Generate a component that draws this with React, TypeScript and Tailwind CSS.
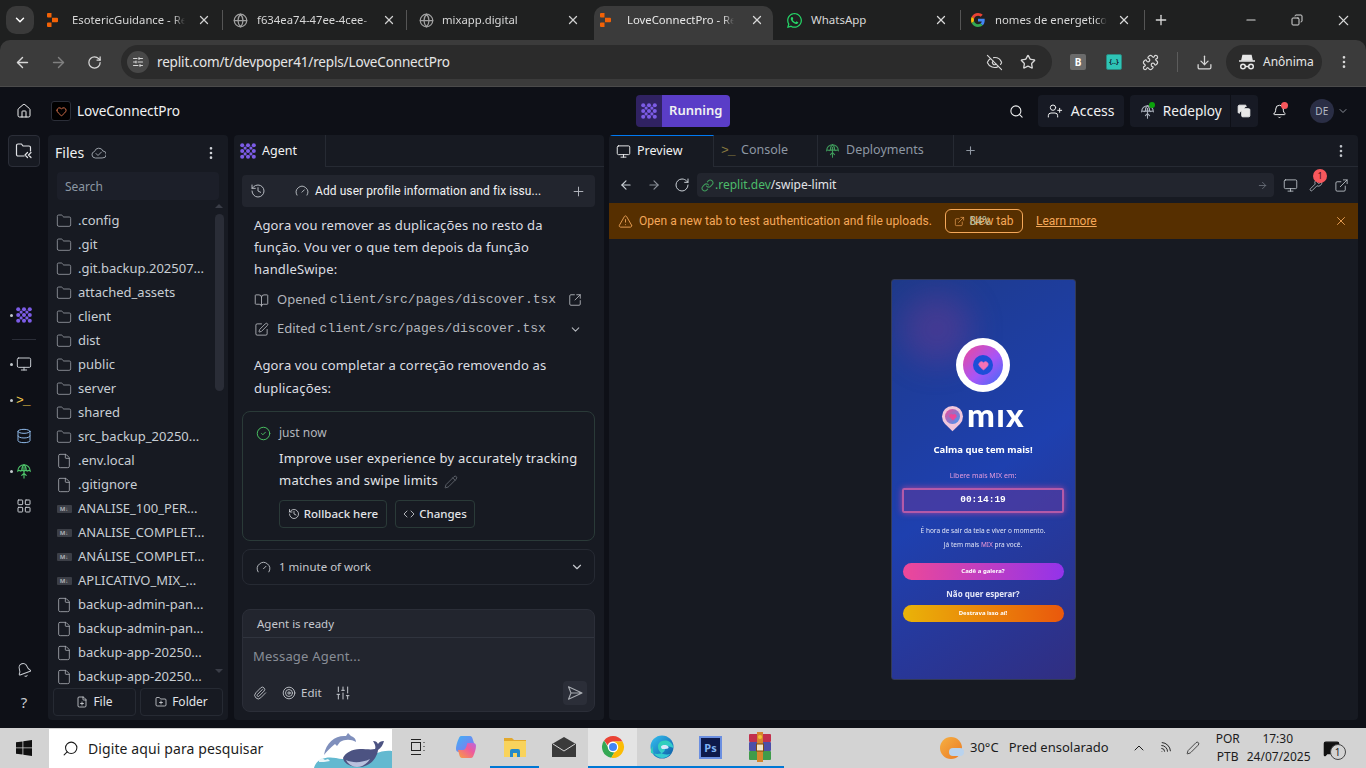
import React from "react";
import {
  ArrowLeft, ArrowRight, Bell, BookOpen, ChevronDown, ChevronUp, Code, Database, Download, ExternalLink, EyeOff, File as FileIcon,
  FilePlus, Folder, FolderPlus, Gauge, Globe, History, Home, LayoutGrid, Link, Minus, Monitor, MoreVertical, Paperclip, Pencil, Plus,
  Puzzle, RotateCw, Search, SlidersHorizontal, SlidersVertical, SquareArrowOutUpRight, SquarePen, Star, Wrench, TriangleAlert, UserPlus, X, CircleCheck, Heart, Copy, Target, MessageSquare, Wifi, Pen,
} from "lucide-react";
import { FaWhatsapp } from "react-icons/fa";

const AgentIcon = ({ size = 18 }: { size?: number }) => (
  <svg width={size} height={size} viewBox="0 0 18 18" fill="#7c5ce6">
    {[2.5, 9, 15.5].map((y) => [2.5, 9, 15.5].map((x) => <circle key={`${x}${y}`} cx={x} cy={y} r="2.3" />))}
    {[5.75, 12.25].map((y) => [5.75, 12.25].map((x) => <circle key={`b${x}${y}`} cx={x} cy={y} r="1.8" />))}
  </svg>
);
const ReplitFav = () => (
  <svg width="11" height="14" viewBox="0 0 11 14" fill="#f26207">
    <path d="M0 1a1 1 0 0 1 1-1h3.5v4.5H1a1 1 0 0 1-1-1zM5 4.7h5a1 1 0 0 1 1 1v2.6a1 1 0 0 1-1 1H5zM0 10.5a1 1 0 0 1 1-1h3.5V14H1a1 1 0 0 1-1-1z" />
  </svg>
);
const GoogleG = () => (
  <svg width="14" height="14" viewBox="0 0 48 48">
    <path fill="#EA4335" d="M24 9.5c3.5 0 6.7 1.2 9.2 3.6l6.9-6.9C35.9 2.4 30.5 0 24 0 14.6 0 6.5 5.4 2.6 13.2l8 6.2C12.5 13.7 17.8 9.5 24 9.5z" />
    <path fill="#4285F4" d="M47 24.5c0-1.6-.1-3.1-.4-4.5H24v9h13c-.6 3-2.3 5.5-4.8 7.2l7.7 6C44.400 38 47 31.800 47 24.500z" />
    <path fill="#FBBC05" d="M10.600 28.600A14.500 14.500 0 0 1 9.800 24c0-1.600.3-3.100.8-4.600l-8-6.200A24 24 0 0 0 0 24c0 3.900.9 7.500 2.600 10.800z" />
    <path fill="#34A853" d="M24 48c6.500 0 11.900-2.100 15.900-5.800l-7.700-6c-2.200 1.400-4.900 2.300-8.200 2.300-6.200 0-11.500-4.200-13.400-9.900l-8 6.200C6.500 42.600 14.600 48 24 48z" />
  </svg>
);
const ChromeLogo = () => (
  <svg width="24" height="24" viewBox="0 0 48 48">
    <path fill="#EA4335" d="M24 2a22 22 0 0 1 19 11H24a11 11 0 0 0-10.500 7.500L6.200 11A22 22 0 0 1 24 2z" />
    <path fill="#34A853" d="M6.200 11l9.500 16.500A11 11 0 0 0 27 34.600L20.500 45.700A22 22 0 0 1 6.200 11z" />
    <path fill="#FBBC05" d="M43 13a22 22 0 0 1-22.500 32.700L30 29.500A11 11 0 0 0 31 17l-7-4z" />
    <circle cx="24" cy="24" r="10.500" fill="#fff" />
    <circle cx="24" cy="24" r="8" fill="#4285F4" />
  </svg>
);
const EdgeLogo = () => (
  <svg width="24" height="24" viewBox="0 0 24 24">
    <defs>
      <linearGradient id="edg" x1="0" y1="0" x2="1" y2="1"><stop offset="0" stopColor="#35c1f1" /><stop offset="1" stopColor="#0c59a4" /></linearGradient>
      <linearGradient id="edg2" x1="0" y1="0" x2="1" y2="1"><stop offset="0" stopColor="#2fd6a3" /><stop offset="1" stopColor="#36c4e8" /></linearGradient>
    </defs>
    <circle cx="12" cy="12" r="11.500" fill="url(#edg)" />
    <path d="M23.400 13c-.4-5-4.600-7.500-8.400-7.500-4.400 0-7 2.800-7 6 0 4.500 3.600 8 8.500 8 1.500 0 3-.4 4-1-2 3-5 4.500-8.500 4.500-2 0-4-.8-5.500-2C3 18.500 2 15 3 11c-2 2-2.500 5-2 7 2 0 4 1 6 1 6 0 8-3 8-5 0-1-.5-1.500-1-2 5-2 7 0 9.400 1z" fill="url(#edg2)" />
    <path d="M11 11.500c2-2 6-2 7.500.5.600 1-1 2-3.500 2s-4 .5-4-2.500z" fill="#d7e9fb" />
  </svg>
);
const WinRar = () => (
  <svg width="24" height="30" viewBox="0 0 24 30">
    <rect x="1" y="2" width="22" height="8" rx="1" fill="#c2304c" />
    <rect x="1" y="10" width="22" height="9" rx="1" fill="#4c4fa8" />
    <rect x="1" y="19" width="22" height="9" rx="1" fill="#3f9b4a" />
    <rect x="9" y="0" width="6" height="30" fill="#d6852c" />
    <rect x="8.500" y="12" width="7" height="7" fill="#f3e4c4" stroke="#7c4a14" />
    <circle cx="12" cy="5" r="2" fill="#f2c231" />
  </svg>
);
const Explorer = () => (
  <svg width="24" height="24" viewBox="0 0 24 24">
    <path d="M1 3h8l2 2h12v3H1z" fill="#e2a82c" />
    <rect x="1" y="6" width="22" height="16" fill="#f9d35c" />
    <path d="M7 22v-6a2 2 0 0 1 2-2h6a2 2 0 0 1 2 2v6h-3v-4h-4v4z" fill="#2389c9" />
  </svg>
);
const Copilot = () => (
  <svg width="22" height="24" viewBox="0 0 22 24">
    <defs>
      <linearGradient id="co1" x1="0" y1="0" x2="1" y2="1"><stop offset="0" stopColor="#3fb1f5" /><stop offset="1" stopColor="#8b6ff0" /></linearGradient>
      <linearGradient id="co2" x1="0" y1="1" x2="1" y2="0"><stop offset="0" stopColor="#f9a03f" /><stop offset=".6" stopColor="#ee5a9b" /><stop offset="1" stopColor="#b569e3" /></linearGradient>
    </defs>
    <path d="M6 1h9c1.500 0 2 1 2.500 2.500L20 11l-7 1c-2 0-2 2-3 5H4C2 17 1 16 1 14c0-4 2-9 3-11 .400-1 1-2 2-2z" fill="url(#co1)" />
    <path d="M16 23H7c-1.500 0-2-1-2.500-2.500L3 15h5c2 0 3-2 3.500-4l.9-3H18c2 0 3 1 3 3 0 3-1.500 7-2.500 9.500-.5 1.500-1 2.500-2.500 2.500z" fill="url(#co2)" />
  </svg>
);
const Incognito = () => (
  <svg width="18" height="16" viewBox="0 0 18 16" fill="none" stroke="#e6e6e6" strokeWidth="1.500">
    <path d="M4 6l1-4.500h8L14 6z" fill="#e6e6e6" />
    <path d="M1 7h16" />
    <circle cx="5" cy="12.500" r="2.300" />
    <circle cx="13" cy="12.500" r="2.300" />
    <path d="M7.300 12.500h3.400" />
  </svg>
);
const DeployIcon = ({ color = "#4ec36a", size = 18 }: { color?: string; size?: number }) => (
  <svg width={size} height={size} viewBox="0 0 18 18" fill="none" stroke={color} strokeWidth="1.300" strokeLinecap="round">
    <path d="M2 9a7 7 0 0 1 14 0c-1-.8-2-.8-3 0-1-.8-3-.8-4 0-1-.8-3-.8-4 0-1-.8-2-.8-3 0z" />
    <path d="M9 2c-2 1.500-2.500 4-2.500 6.500M9 2c2 1.500 2.500 4 2.500 6.500M9 5v12M6.500 14L9 11.500l2.500 2.500" />
  </svg>
);
const FolderBack = () => (
  <svg width="18" height="18" viewBox="0 0 18 18" fill="none" stroke="#e0e2e6" strokeWidth="1.200" strokeLinecap="round" strokeLinejoin="round">
    <path d="M9 14H3a1.500 1.500 0 0 1-1.500-1.500v-9A1.500 1.500 0 0 1 3 2h3.500l1.500 2h6a1.500 1.500 0 0 1 1.500 1.500V9" />
    <path d="M12.500 10.500L10 13l2.500 2.500M16 10.500L13.500 13l2.500 2.500" />
  </svg>
);
const CloudCheck = () => (
  <svg width="15" height="12" viewBox="0 0 15 12" fill="none" stroke="#9aa0a8" strokeWidth="1" strokeLinecap="round" strokeLinejoin="round">
    <path d="M4 11a3.300 3.300 0 0 1-.5-6.500A4.500 4.500 0 0 1 12 4a3.500 3.500 0 0 1-.5 7z" />
    <path d="M5 6.500L7 8.500l3.500-3.500" />
  </svg>
);
const PaperPlane = () => (
  <svg width="16" height="16" viewBox="0 0 16 16" fill="none" stroke="#a8acb2" strokeWidth="1.100" strokeLinejoin="round">
    <path d="M1.500 1.800L15 8 1.500 14.200 4 8zM4 8h11" />
  </svg>
);
const Whale = () => (
  <svg width="80" height="40" viewBox="0 0 80 40">
    <path d="M2 40c2-8 10-12 22-10 14 3 26 1 38-4 7-3 14-4 18-3v17z" fill="#63b9d0" />
    <path d="M7 32l3-2 3 2 3-1 2 2-6 1-5 0z" fill="#e8f5f8" />
    <path d="M12 27C14 14 24 7 34 8l2-3 3 3c3 1 5 3 5 6-5-3-11-3-16 0l-3 4-2-2c-4 3-8 7-11 11z" fill="#7f8fbc" />
    <path d="M31 30c2-5 9-9 17-9 6 0 11 1 15 0 1-2 0-5-2-8 3 0 4 1 5 3 1-2 3-3 6-3-1 4-3 7-6 9-1 8-8 17-19 17-8 0-15-3-16-9z" fill="#4c5382" />
    <path d="M34 32c6 3 16 3 24-1-3 5-8 8-13 8-5 0-9-3-11-7z" fill="#b9c1de" />
  </svg>
);
const ThreeDots = ({ className = "" }: { className?: string }) => <MoreVertical size={16} className={className} strokeWidth={2} />;

const fade = "flex-1 whitespace-nowrap overflow-hidden text-[11.300px] [mask-image:linear-gradient(to_right,black_90%,transparent)]";

function ChromeBar() {
  return (
    <div className="h-[87px] shrink-0 bg-[#1f2020] text-[#d8d8d8] [font-family:'Noto_Sans',sans-serif]">
      <div className="h-10 flex items-start">
        <div className="ml-[6px] mt-[6px] w-7 h-7 rounded-[10px] bg-[#3a3a3a] flex items-center justify-center"><ChevronDown size={14} className="text-white" strokeWidth={2.500} /></div>
        <div className="ml-[6px] flex items-center h-10">
          <div className="w-[183px] flex items-center pl-[4px] pr-[11px] gap-[12px] h-5 border-r border-[#555]">
            <div className="w-4 flex justify-center shrink-0"><ReplitFav /></div>
            <span className={fade}>EsotericGuidance - Re</span>
            <X size={14} className="shrink-0 text-[#d0d0d0]" strokeWidth={2.200} />
          </div>
          <div className="w-[184px] flex items-center pl-[9px] pr-[10px] gap-[9px] h-5 border-r border-[#555]">
            <Globe size={15} className="text-[#a0a0a0] shrink-0 mx-[0.5px]" />
            <span className={fade}>f634ea74-47ee-4cee-</span>
            <X size={14} className="shrink-0 text-[#d0d0d0]" strokeWidth={2.200} />
          </div>
          <div className="w-[187px] flex items-center pl-[11px] pr-[14px] gap-[8px] h-5">
            <Globe size={15} className="text-[#a0a0a0] shrink-0 mx-[0.5px]" />
            <span className={fade}>mixapp.digital</span>
            <X size={14} className="shrink-0 text-[#d0d0d0]" strokeWidth={2.200} />
          </div>
        </div>
        <div className="mt-[6px] w-[179px] h-[34px] bg-[#3b3b3b] rounded-t-[10px] flex items-center pl-[5px] pr-[9px] pb-[6px] gap-[16px]">
          <div className="w-3 flex justify-center shrink-0"><ReplitFav /></div>
          <span className={`${fade} text-[#e8e8e8]`}>LoveConnectPro - Re</span>
          <X size={14} strokeWidth={2.200} className="shrink-0" />
        </div>
        <div className="flex items-center h-10 ml-[13px]">
          <div className="w-[175px] flex items-center h-5 pr-[12px] gap-[8px] border-r border-[#555]">
            <FaWhatsapp size={17} className="text-[#25d366] shrink-0" />
            <span className="flex-1 text-[11.500px]">WhatsApp</span>
            <X size={14} strokeWidth={2.200} />
          </div>
          <div className="w-[184px] flex items-center h-5 pl-[10px] pr-[13px] gap-[10px] border-r border-[#555]">
            <GoogleG />
            <span className={fade}>nomes de energetico</span>
            <X size={14} strokeWidth={2.200} />
          </div>
          <Plus size={16} className="ml-[8px]" strokeWidth={2} />
        </div>
        <div className="ml-auto flex items-center h-10">
          <div className="w-[46px] flex justify-center"><Minus size={14} /></div>
          <div className="w-[46px] flex justify-center"><Copy size={12} className="-scale-x-100" /></div>
          <div className="w-[46px] flex justify-center"><X size={17} strokeWidth={1.500} /></div>
        </div>
      </div>
      <div className="h-[47px] bg-[#3b3b3b] rounded-t-[10px] flex items-center border-b border-[#4b4b4b] pb-[2px]">
        <ArrowLeft size={17} className="ml-[14px]" />
        <ArrowRight size={17} className="ml-[19px] text-[#808080]" />
        <RotateCw size={15} className="ml-[20px]" strokeWidth={2} />
        <div className="ml-[19px] w-[931px] h-[34px] rounded-full bg-[#2b2b2b] flex items-center pl-[6px] pr-[16px]">
          <div className="w-[22px] h-[22px] rounded-full bg-[#484848] flex items-center justify-center"><SlidersHorizontal size={12} /></div>
          <span className="ml-[8px] text-[13.500px] text-[#e6e6e6] tracking-[-0.15px]">replit.com/t/devpoper41/repls/LoveConnectPro</span>
          <EyeOff size={17} className="ml-auto" strokeWidth={1.600} />
          <Star size={16} className="ml-[17px]" strokeWidth={2} />
        </div>
        <div className="ml-[18px] w-4 h-4 rounded-[2px] bg-[#6b6b6b] text-white text-[10px] font-bold flex items-center justify-center">B</div>
        <div className="ml-[20px] w-4 h-4 rounded-[2px] bg-[#2ec4b6] border border-[#2a8a80] text-[#123] text-[7px] font-bold flex items-center justify-center">{"{..}"}</div>
        <Puzzle size={17} className="ml-[20px]" strokeWidth={1.700} />
        <div className="ml-[18px] w-px h-5 bg-[#5c5c5c]" />
        <Download size={17} className="ml-[18px]" strokeWidth={1.800} />
        <div className="ml-[13px] w-[96px] h-[34px] rounded-full bg-[#2b2b2b] flex items-center pl-[12px] gap-[7px]">
          <Incognito />
          <span className="text-xs text-[#e6e6e6]">Anônima</span>
        </div>
        <ThreeDots className="ml-[14px]" />
      </div>
    </div>
  );
}

function AppBar() {
  return (
    <div className="h-12 shrink-0 flex items-center bg-[#0e1017] text-[#f0f1f2]">
      <Home size={16} className="ml-4" strokeWidth={1.500} />
      <div className="ml-[19px] w-5 h-5 rounded-[3px] bg-black border border-[#2b2e38] flex items-center justify-center"><Heart size={11} className="text-[#e0764f]" strokeWidth={2} /></div>
      <span className="ml-[6px] text-[13.600px] tracking-[-0.1px]">LoveConnectPro</span>
      <div className="ml-[456px] flex h-8">
        <div className="w-[26px] bg-[#302262] rounded-l-[4px] flex items-center justify-center"><AgentIcon size={16} /></div>
        <div className="w-[68px] bg-[#5a3dc7] rounded-r-[4px] flex items-center justify-center text-[13px] font-semibold">Running</div>
      </div>
      <Search size={15} className="ml-[279px]" strokeWidth={1.700} />
      <div className="ml-[14px] w-[86px] h-8 rounded-[4px] bg-[#171a24] flex items-center pl-[9px] gap-[8px]">
        <UserPlus size={16} strokeWidth={1.500} />
        <span className="text-sm">Access</span>
      </div>
      <div className="ml-[6px] flex h-8 bg-[#171a24] rounded-[4px]">
        <div className="w-[101px] flex items-center pl-[10px] gap-[8px] border-r border-[#0e1017] relative">
          <DeployIcon color="#aab0bb" size={15} />
          <span className="absolute left-[19px] top-[7px] w-[6px] h-[6px] rounded-full bg-[#0ca30c]" />
          <span className="text-[13.600px]">Redeploy</span>
        </div>
        <div className="w-[27px] flex items-center justify-center"><Copy size={14} fill="#e8e8e8" strokeWidth={1.500} /></div>
      </div>
      <div className="relative ml-[14px]">
        <Bell size={15} strokeWidth={1.600} />
        <span className="absolute -top-[2px] left-[9px] w-[7px] h-[7px] rounded-full bg-[#f8575c]" />
      </div>
      <div className="ml-[23px] w-6 h-6 rounded-full bg-[#2a2e45] text-[#b5b9c4] text-[10px] flex items-center justify-center">DE</div>
      <ChevronDown size={12} className="ml-[3px] text-[#8a8f98]" />
    </div>
  );
}

function Rail() {
  const Dot = () => <span className="w-[3px] h-[3px] rounded-full bg-[#c2c8cc] absolute -left-[6px] top-[7px]" />;
  return (
    <div className="w-12 shrink-0 flex flex-col items-center text-[#c8ccd2]">
      <div className="w-8 h-8 rounded-[4px] bg-[#171a22] border border-[#2b2e38] flex items-center justify-center">
        <FolderBack />
      </div>
      <div className="relative mt-[140px]"><Dot /><AgentIcon size={16} /></div>
      <div className="w-6 h-px bg-[#2b2e38] mt-[16px]" />
      <div className="relative mt-[16px]"><Dot /><Monitor size={16} strokeWidth={1.500} /></div>
      <div className="relative mt-[20px] h-4 w-4 flex items-center"><Dot /><span className="text-[#f2c94c] text-[13px] font-mono leading-none tracking-[-1px]">&gt;_</span></div>
      <div className="mt-[20px]"><Database size={16} strokeWidth={1.500} className="text-[#8db8e8]" /></div>
      <div className="relative mt-[19px]"><Dot /><DeployIcon size={16} /></div>
      <div className="mt-[19px]"><LayoutGrid size={16} strokeWidth={1.500} /></div>
      <div className="mt-auto mb-[17px]"><Bell size={16} strokeWidth={1.500} className="rotate-[-20deg]" /></div>
      <div className="mb-[7px] h-[18px] text-[15px] leading-none">?</div>
    </div>
  );
}

const files: [string, string][] = [
  ["d", ".config"], ["d", ".git"], ["d", ".git.backup.202507..."], ["d", "attached_assets"], ["d", "client"], ["d", "dist"], ["d", "public"], ["d", "server"], ["d", "shared"], ["d", "src_backup_20250..."],
  ["f", ".env.local"], ["f", ".gitignore"], ["m", "ANALISE_100_PER..."], ["m", "ANALISE_COMPLET..."], ["m", "ANÁLISE_COMPLET..."], ["m", "APLICATIVO_MIX_..."],
  ["f", "backup-admin-pan..."], ["f", "backup-admin-pan..."], ["f", "backup-app-20250..."], ["f", "backup-app-20250..."],
];

function FilesPanel() {
  return (
    <div className="w-[180px] shrink-0 rounded-[4px] bg-[#171a22] flex flex-col text-[#c8ced4]">
      <div className="h-[35px] flex items-center pl-[7px] pr-[9px]">
        <span className="text-sm text-[#f0f1f2]">Files</span>
        <div className="ml-[7px]"><CloudCheck /></div>
        <ThreeDots className="ml-auto text-[#d0d3d8]" />
      </div>
      <div className="mx-[9px] mt-[2px] h-7 pt-[1px] rounded-[4px] bg-[#1c1f29] flex items-center pl-2 text-xs text-[#8b97a3]">Search</div>
      <div className="mt-[9px] flex h-[478px]">
        <div className="w-[162px] pl-[9px] overflow-hidden">
          {files.map(([k, n], i) => (
            <div key={i} className="h-6 flex items-center gap-[7px]">
              <div className="w-[14px] flex justify-center shrink-0">
                {k === "d" && <Folder size={16} strokeWidth={1.200} className="text-[#9da1a8] shrink-0" />}
                {k === "f" && <FileIcon size={16} strokeWidth={1.200} className="text-[#b0b4ba] shrink-0" />}
                {k === "m" && <span className="w-[15px] h-[8px] shrink-0 rounded-[1px] bg-[#3c3f47] text-[#a8acb2] text-[6px] leading-[8px] text-center font-bold">M↓</span>}
              </div>
              <span className="text-[13px] whitespace-nowrap">{n}</span>
            </div>
          ))}
        </div>
        <div className="w-[12px] ml-[3px] flex flex-col items-center -mt-[9px]">
          <span className="mt-[4px] w-0 h-0 border-x-[4px] border-x-transparent border-b-[4px] border-b-[#3a3d47]" />
          <span className="mt-[6px] w-[9px] h-[177px] rounded-full bg-[#2a2d37]" />
          <span className="mt-auto mb-[14px] w-0 h-0 border-x-[4px] border-x-transparent border-t-[4px] border-t-[#3a3d47]" />
        </div>
      </div>
      <div className="mt-[1px] pl-[5px] pr-[5px] flex gap-1 text-xs text-[#e2e4e8]">
        <div className="w-[83px] h-7 rounded-[4px] border border-[#262a33] flex items-center justify-center gap-[5px]"><FilePlus size={12} strokeWidth={1.500} />File</div>
        <div className="w-[83px] h-7 rounded-[4px] border border-[#262a33] flex items-center justify-center gap-[5px]"><FolderPlus size={12} strokeWidth={1.500} />Folder</div>
      </div>
    </div>
  );
}

function AgentPanel() {
  return (
    <div className="ml-[6px] w-[370px] shrink-0 rounded-[4px] bg-[#171a22] flex flex-col text-[#dcdee2]">
      <div className="h-[32px] flex shrink-0">
        <div className="w-[92px] flex items-center pl-[6px] gap-[6px] border-r border-[#262a33] text-[#f0f1f2]"><AgentIcon size={16} /><span className="text-[12.500px]">Agent</span></div>
        <div className="flex-1 border-b border-[#262a33]" />
      </div>
      <div className="ml-2 mr-[9px] mt-2 h-8 rounded-[4px] bg-[#22252e] flex items-center pl-[8px] pr-[9px] text-[#f0f1f2]">
        <History size={16} strokeWidth={1.500} className="text-[#b5b9c0]" />
        <Gauge size={14} strokeWidth={1.500} className="ml-[29px] text-[#c5c9ce]" />
        <span className="ml-[6px] text-xs [font-family:'Roboto',sans-serif] tracking-[0.08px]">Add user profile information and fix issu...</span>
        <Plus size={15} strokeWidth={1.500} className="ml-auto text-[#b5b9c0]" />
      </div>
      <div className="mt-[7px] pl-5 pr-4 text-[13px] leading-[22px] tracking-[0.15px]">
        <p>Agora vou remover as duplicações no resto da função. Vou ver o que tem depois da função handleSwipe:</p>
      </div>
      <div className="mt-[9px] pl-5 pr-[22px] h-[22px] flex items-center text-[13px] text-[#b3b6bc]">
        <BookOpen size={15} strokeWidth={1.400} />
        <span className="ml-[8px]">Opened</span>
        <span className="ml-[4px] [font-family:'Liberation_Mono',monospace]">client/src/pages/discover.tsx</span>
        <SquareArrowOutUpRight size={14} strokeWidth={1.500} className="ml-auto" />
      </div>
      <div className="mt-[7px] pl-5 pr-[22px] h-[22px] flex items-center text-[13px] text-[#b3b6bc]">
        <SquarePen size={15} strokeWidth={1.400} />
        <span className="ml-[8px]">Edited</span>
        <span className="ml-[4px] [font-family:'Liberation_Mono',monospace]">client/src/pages/discover.tsx</span>
        <ChevronDown size={13} className="ml-auto" />
      </div>
      <div className="mt-[14px] pl-5 pr-4 text-[13px] leading-[23px] tracking-[0.15px]">
        <p>Agora vou completar a correção removendo as duplicações:</p>
      </div>
      <div className="ml-2 mr-[9px] mt-[11px] h-[130px] rounded-lg border border-[#2a3a38] pt-[11px] pl-[13px] flex flex-col">
        <div className="flex items-center h-5">
          <CircleCheck size={15} className="text-[#4cc864]" strokeWidth={1.500} />
          <span className="ml-[8px] text-xs text-[#b3b6bc]">just now</span>
        </div>
        <p className="ml-[23px] mt-[4px] text-[13px] leading-[22px] text-[#e2e4e8] tracking-[0.22px] whitespace-nowrap">Improve user experience by accurately tracking<br />matches and swipe limits <Pencil size={14} strokeWidth={1} className="inline ml-[2px] text-[#8a8f98]" /></p>
        <div className="ml-[23px] mt-[9px] flex gap-2 text-[11.500px] font-medium text-[#e2e4e8]">
          <div className="w-[108px] h-7 rounded-[4px] border border-[#2a3a38] flex items-center justify-center gap-[4px]"><History size={12} strokeWidth={1.500} />Rollback here</div>
          <div className="w-[80px] h-7 rounded-[4px] border border-[#2a3a38] flex items-center justify-center gap-[4px]"><Code size={12} strokeWidth={1.500} />Changes</div>
        </div>
      </div>
      <div className="ml-2 mr-[9px] mt-2 h-9 rounded-lg border border-[#262a33] flex items-center pl-[13px] pr-[10px] text-[11.500px] text-[#c5c8ce]">
        <Gauge size={15} strokeWidth={1.400} />
        <span className="ml-[8px]">1 minute of work</span>
        <ChevronDown size={14} className="ml-auto" />
      </div>
      <div className="ml-2 mr-[9px] mt-[24px] h-[103px] rounded-lg border border-[#2b2e38] bg-[#22252e] flex flex-col">
        <div className="h-[28px] shrink-0 flex items-center pl-[14px] border-b border-[#30343e] text-[11.500px] text-[#c5c8ce]">Agent is ready</div>
        <div className="mt-[9px] ml-[10px] text-[13px] text-[#888d96] tracking-[0.2px]">Message Agent...</div>
        <div className="mt-auto mb-[6px] flex items-center pl-[10px] pr-[7px] text-[11.500px] text-[#c5c8ce]">
          <Paperclip size={14} strokeWidth={1.500} />
          <Target size={14} strokeWidth={1.500} className="ml-[15px]" />
          <span className="ml-[5px]">Edit</span>
          <SlidersVertical size={16} strokeWidth={1.500} className="ml-[13px]" />
          <div className="ml-auto w-6 h-6 rounded-[4px] bg-[#2b2e38] flex items-center justify-center"><PaperPlane /></div>
        </div>
      </div>
    </div>
  );
}

function Phone() {
  return (
    <div className="relative w-[185px] h-[401px] rounded-[3px] overflow-hidden bg-[linear-gradient(145deg,#1e3a8a_0%,#1e40af_50%,#312e81_100%)] flex flex-col items-center text-white blur-[0.4px] border border-[#333a55]">
      <div className="absolute left-[10px] top-[14px] w-[70px] h-[70px] rounded-full bg-[#8b3a90] opacity-35 blur-[16px]" />
      <div className="relative mt-[58px] w-[54px] h-[54px] rounded-full bg-white flex items-center justify-center">
        <div className="w-[40px] h-[40px] rounded-full bg-[linear-gradient(135deg,#ec4899,#a855f7_55%,#3b6df6)] flex items-center justify-center">
          <div className="w-[20px] h-[20px] rounded-full bg-[#1d4ed8] flex items-center justify-center"><Heart size={11} fill="#f472b6" className="text-[#f472b6]" /></div>
        </div>
      </div>
      <div className="relative mt-[10px] h-[28px] flex items-center gap-[4px] ml-[1px]">
        <div className="w-[21px] h-[21px] rounded-[50%_50%_50%_0] -rotate-45 bg-[#f0c6dc] flex items-center justify-center">
          <div className="w-[15px] h-[15px] rounded-full bg-[linear-gradient(135deg,#ec4899,#3b9df6)] flex items-center justify-center rotate-45"><Heart size={8} fill="#ec4899" className="text-[#ec4899]" /></div>
        </div>
        <span className="text-[33px] leading-none font-black [font-family:'Lato',sans-serif] tracking-[1.300px] -mt-[3px]">mıx</span>
      </div>
      <div className="relative mt-[15px] text-[9.500px] font-bold leading-none [font-family:'Noto_Sans',sans-serif]">Calma que tem mais!</div>
      <div className="relative mt-[17px] text-[7px] leading-none text-[#e59bdc]">Libere mais MIX em:</div>
      <div className="relative mt-[9px] w-[162px] h-[25px] rounded-[2px] border-2 border-[#b35aa8] bg-[#5a3a9e]/60 shadow-[0_0_6px_#ec4899aa] flex items-center justify-center text-[9.500px] font-bold [font-family:'Liberation_Mono',monospace]">00:14:19</div>
      <div className="relative mt-[15px] text-[6.500px] leading-none text-[#dfe3f5]">É hora de sair da tela e viver o momento.</div>
      <div className="relative mt-[8px] text-[6.500px] leading-none text-[#dfe3f5]">Já tem mais <span className="text-[#f29ad6]">MIX</span> pra você.</div>
      <div className="relative mt-[14px] w-[161px] h-[17px] rounded-full bg-[linear-gradient(90deg,#ec4899,#9333ea)] flex items-center justify-center text-[6px] font-bold">Cadê a galera?</div>
      <div className="relative mt-[10px] text-[8px] font-bold leading-none text-[#e4e7f7]">Não quer esperar?</div>
      <div className="relative mt-[7px] w-[161px] h-[17px] rounded-full bg-[linear-gradient(90deg,#eab308,#ea580c)] flex items-center justify-center text-[6px] font-bold">Destrava isso aí!</div>
    </div>
  );
}

function PreviewPanel() {
  const Tab = ({ w, icon, label, active }: { w: string; icon: React.ReactNode; label: string; active?: boolean }) => (
    <div className={`${w} flex items-center pl-[7px] gap-[6px] border-r border-[#262a33] text-[12.500px] ${active ? "border-t border-t-[#0079f2] text-[#f0f1f2]" : "border-b border-b-[#262a33] text-[#8d97a3]"}`}>{icon}{label}</div>
  );
  return (
    <div className="ml-[5px] w-[749px] shrink-0 rounded-[4px] bg-[#171a22] flex flex-col overflow-hidden text-[#c8ced4]">
      <div className="h-[32px] shrink-0 flex">
        <Tab w="w-[105px]" active label="Preview" icon={<Monitor size={15} strokeWidth={1.500} />} />
        <Tab w="w-[104px]" label="Console" icon={<span className="text-[#8a7a40] text-[13px] font-mono leading-none tracking-[-1px] w-[14px]">&gt;_</span>} />
        <Tab w="w-[136px]" label="Deployments" icon={<DeployIcon size={15} color="#3f9a5b" />} />
        <div className="flex-1 flex items-center border-b border-[#262a33] pl-[10px] pr-[9px]">
          <Plus size={13} className="text-[#9098a3]" />
          <ThreeDots className="ml-auto text-[#c0c4ca]" />
        </div>
      </div>
      <div className="h-[36px] shrink-0 flex items-center">
        <ArrowLeft size={14} className="ml-[10px]" />
        <ArrowRight size={14} className="ml-[14px] text-[#8a8f98]" />
        <RotateCw size={16} className="ml-[13px]" strokeWidth={1.500} />
        <div className="ml-[7px] w-[577px] h-6 rounded-[4px] bg-[#22252e] flex items-center pl-[4px] pr-[6px] text-xs">
          <Link size={13} className="text-[#3f9a5b]" />
          <span className="ml-[1px] text-[#4cbb6a]">.replit.dev</span>
          <span className="text-[#e2e4e8]">/swipe-limit</span>
          <ArrowRight size={11} className="ml-auto text-[#666b75]" />
        </div>
        <Monitor size={15} strokeWidth={1.300} className="ml-[9px]" />
        <div className="relative ml-[11px]">
          <Wrench size={14} strokeWidth={1.300} />
          <span className="absolute -top-[9px] left-[4px] w-[14px] h-[14px] rounded-full bg-[#f8575c] text-[#4a1014] text-[9px] leading-[14px] text-center">1</span>
        </div>
        <ExternalLink size={15} strokeWidth={1.300} className="ml-[11px]" />
      </div>
      <div className="h-9 shrink-0 bg-[#562f00] flex items-center pl-[9px] pr-[10px] text-[#f5a85a] text-xs [font-family:'Roboto',sans-serif]">
        <TriangleAlert size={15} strokeWidth={1.400} />
        <span className="ml-[6px] tracking-[0.05px]">Open a new tab to test authentication and file uploads.</span>
        <div className="ml-[13px] w-[78px] h-6 rounded-[6px] border border-[#f5a85a] flex items-center justify-center gap-[4px]">
          <ExternalLink size={11} strokeWidth={1.400} />
          <span className="relative">New tab<span className="absolute left-0 top-0 text-[#a9b8a0] tracking-[-0.5px]">84%</span></span>
        </div>
        <span className="ml-[13px] underline">Learn more</span>
        <X size={14} className="ml-auto" strokeWidth={1.500} />
      </div>
      <div className="flex-1 flex justify-center pt-[40px] pr-[1px]"><Phone /></div>
    </div>
  );
}

function Taskbar() {
  return (
    <div className="h-10 shrink-0 bg-[#d3d3d3] flex items-center text-[#1c1c1c] [font-family:'Noto_Sans',sans-serif]">
      <svg width="16" height="16" viewBox="0 0 16 16" className="ml-4" fill="#111"><path d="M0 2.300L6.500 1.400V7.500H0zM7.300 1.300L16 0V7.500H7.300zM0 8.300H6.500V14.600L0 13.700zM7.300 8.300H16V16L7.300 14.700z" /></svg>
      <div className="ml-[17px] w-[343px] h-[39px] bg-white flex items-center overflow-hidden">
        <Search size={17} className="ml-[13px] -scale-x-100" strokeWidth={1.500} />
        <span className="ml-[9px] text-[14px] tracking-[0.1px]">Digite aqui para pesquisar</span>
        <div className="ml-auto"><Whale /></div>
      </div>
      <div className="flex items-center h-10">
        {[
          { n: <svg width="16" height="18" viewBox="0 0 16 18" fill="none" stroke="#222"><rect x="2.500" y="4.500" width="9" height="8" /><path d="M2 1.500h10M2 16.500h10M15 4v1M15 8v1M15 12v1" /></svg>, l: false },
          { n: <Copilot />, l: false },
          { n: <Explorer />, l: true },
          { n: <svg width="24" height="20" viewBox="0 0 24 20" fill="#3a3a3a"><path d="M0 7L12 0l12 7v13H0z" /><path d="M1 7l11 7 11-7" stroke="#d3d3d3" fill="none" /></svg>, l: false },
          { n: <ChromeLogo />, l: true, a: true },
          { n: <EdgeLogo />, l: true },
          { n: <div className="w-[23px] h-[23px] bg-[#0d1a4a] border-2 border-[#6b8fe0] text-[#7fb2f2] text-[11px] font-bold flex items-center justify-center leading-none">Ps</div>, l: true },
          { n: <WinRar />, l: true },
        ].map((it, i) => (
          <div key={i} className={`w-[49px] h-10 flex items-center justify-center border-b-[2px] ${it.l ? "border-[#0078d4]" : "border-transparent"} ${it.a ? "bg-[#e4e4e4]" : ""}`}>{it.n}</div>
        ))}
      </div>
      <div className="ml-[156px] flex items-center">
        <div className="relative w-[22px] h-[22px] rounded-full bg-[linear-gradient(135deg,#f6b042,#ea7a25)]">
          <span className="absolute right-[-2px] bottom-[3px] w-[15px] h-[8px] rounded-full bg-[#b9d3ee]" />
        </div>
        <span className="ml-[8px] text-[13px]">30°C</span>
        <span className="ml-[10px] text-[13px]">Pred ensolarado</span>
      </div>
      <ChevronUp size={16} className="ml-[22px]" strokeWidth={1.500} />
      <Wifi size={14} className="ml-[11px] rotate-45" strokeWidth={1.500} />
      <Pen size={14} className="ml-[14px]" strokeWidth={1.300} />
      <div className="ml-[14px] text-xs leading-[18px] text-center w-[28px]">POR<br />PTB</div>
      <div className="ml-[5px] text-xs leading-[18px] text-center w-[62px]">17:30<br />24/07/2025</div>
      <div className="relative ml-[14px]">
        <MessageSquare size={17} fill="#111" className="text-[#111]" />
        <span className="absolute left-[7px] top-[4px] w-[16px] h-[16px] rounded-full border border-[#444] bg-[#d3d3d3] text-[10px] leading-[14px] text-center">1</span>
      </div>
    </div>
  );
}

export default function App() {
  return (
    <div className="w-[1366px] h-[768px] overflow-hidden flex flex-col bg-[#0e1017] [font-family:'Noto_Sans',sans-serif]">
      <ChromeBar />
      <AppBar />
      <div className="h-[585px] shrink-0 flex">
        <Rail />
        <FilesPanel />
        <AgentPanel />
        <PreviewPanel />
      </div>
      <div className="h-2 shrink-0" />
      <Taskbar />
    </div>
  );
}
